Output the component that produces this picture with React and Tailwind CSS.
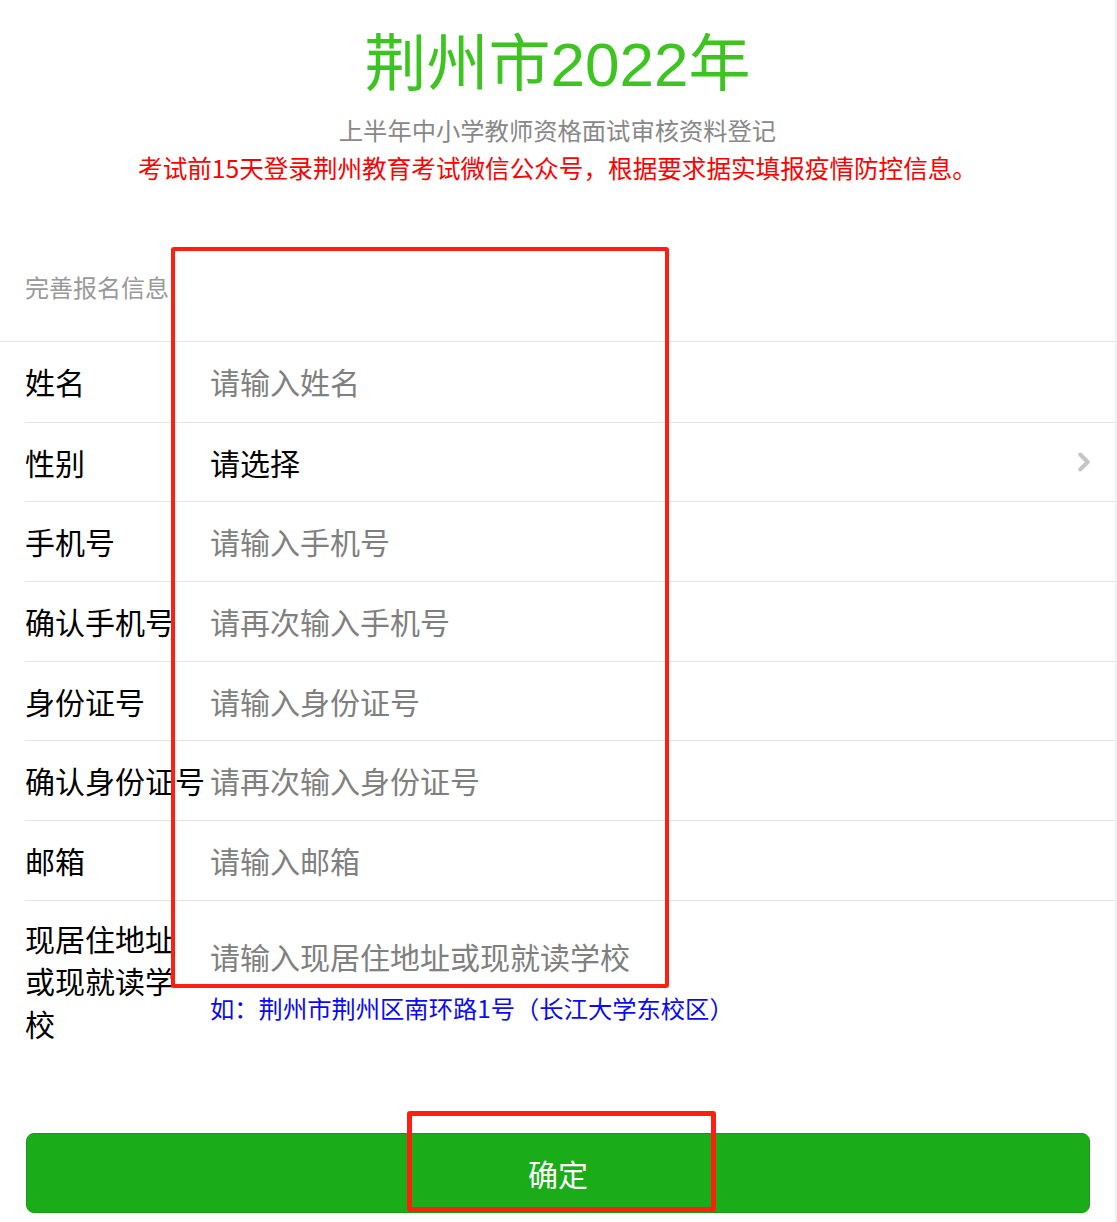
import { ChevronRight } from 'lucide-react';

const rows = [
  { label: '姓名', placeholder: '请输入姓名' },
  { label: '性别', value: '请选择', select: true },
  { label: '手机号', placeholder: '请输入手机号' },
  { label: '确认手机号', placeholder: '请再次输入手机号' },
  { label: '身份证号', placeholder: '请输入身份证号' },
  { label: '确认身份证号', placeholder: '请再次输入身份证号' },
  { label: '邮箱', placeholder: '请输入邮箱' },
];

const font = { fontFamily: '"Noto Sans CJK SC", "Liberation Sans", sans-serif' };

export default function App() {
  return (
    <div className="relative w-[1117px] min-h-[1222px] bg-white border-r-2 border-[#f0f0f0]" style={font}>
      {/* Header */}
      <div className="text-center">
        <h1 className="pt-[30px] text-[62px] leading-[70px] text-[#3cc51f] font-normal" style={{ fontFamily: '"Liberation Sans", "Noto Sans CJK SC", sans-serif' }}>
          荆州市2022年
        </h1>
        <p className="mt-[12px] text-[24.3px] leading-[36px] text-[#888]">上半年中小学教师资格面试审核资料登记</p>
        <p className="mt-[1px] text-[24.6px] leading-[36px] text-[#ff0000]">
          考试前15天登录荆州教育考试微信公众号，根据要求据实填报疫情防控信息。
        </p>
      </div>

      {/* Section title */}
      <div className="mt-[84px] pb-[36px] pl-[25px] text-[24px] leading-[36px] text-[#999]">完善报名信息</div>

      {/* Cells */}
      <div className="border-t border-[#e5e5e5]">
        {rows.map((row, i) => (
          <div key={row.label} className={`ml-[25px] h-[79.7px] flex items-center ${i > 0 ? 'border-t border-[#e5e5e5]' : ''}`}>
            <div className="w-[185px] shrink-0 whitespace-nowrap text-[30px] text-black">{row.label}</div>
            <div className={`flex-1 text-[30px] ${row.select ? 'text-black' : 'text-[#808080]'}`}>
              {row.value || row.placeholder}
            </div>
            {row.select && <ChevronRight className="mr-[16px] h-[30px] w-[30px] text-[#c4c4c9]" strokeWidth={3.2} />}
          </div>
        ))}

        {/* Address row */}
        <div className="ml-[25px] flex border-t border-[#e5e5e5] pt-[16px] pb-[20px]">
          <div className="w-[185px] shrink-0 text-[30px] leading-[42.5px] text-black">
            现居住地址<br />或现就读学<br />校
          </div>
          <div className="flex-1 pt-[18px]">
            <div className="text-[30px] leading-[43px] text-[#808080]">请输入现居住地址或现就读学校</div>
            <div className="mt-[12px] text-[24.3px] leading-[36px] text-[#0a0af5]">如：荆州市荆州区南环路1号（长江大学东校区）</div>
          </div>
        </div>
      </div>

      {/* Submit */}
      <div className="mt-[69px] pl-[26px] pr-[25px]">
        <button className="w-full h-[80px] rounded-[8px] bg-[#1aad19] border border-[#179b16] text-white text-[30px]">确定</button>
      </div>

      {/* Annotation boxes */}
      <div className="absolute left-[171px] top-[247px] w-[498px] h-[741px] border-[4px] border-[#ff1f10] rounded-[3px] pointer-events-none" />
      <div className="absolute left-[407px] top-[1111px] w-[309px] h-[101px] border-[5px] border-[#ff1f10] rounded-[3px] pointer-events-none" />
    </div>
  );
}
